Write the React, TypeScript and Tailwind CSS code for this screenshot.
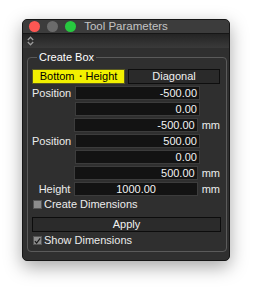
import React from "react";

const font = { fontFamily: '"Liberation Sans", Arial, sans-serif' };

function Field({ value, center }: { value: string; center?: boolean }) {
  return (
    <div
      className={`h-[14px] w-[125px] bg-[#131313] border border-[#3c3c3c] text-[11px] leading-[12px] text-[#f2f2f2] px-[2px] ${
        center ? "text-center" : "text-right"
      }`}
    >
      {value}
    </div>
  );
}

function Row({ label, value, unit, center }: { label?: string; value: string; unit?: boolean; center?: boolean }) {
  return (
    <div className="flex items-center h-[14px]">
      <div className="w-[43px] pr-[4px] text-right text-[11px] leading-[14px] text-[#ececec]">{label ?? ""}</div>
      <Field value={value} center={center} />
      <div className="pl-[4px] text-[11px] leading-[14px] text-[#ececec]">{unit ? "mm" : ""}</div>
    </div>
  );
}

function Check({ checked }: { checked?: boolean }) {
  return (
    <div className="w-[9px] h-[9px] bg-[#8c8c8c] border border-[#555] flex items-center justify-center">
      {checked && (
        <svg width="8" height="8" viewBox="0 0 8 8">
          <path d="M1 4.2 L3 6.3 L7 1" stroke="#1a1a1a" strokeWidth="1.4" fill="none" />
        </svg>
      )}
    </div>
  );
}

export default function App() {
  return (
    <div className="w-[253px] h-[287px] bg-white pt-[19px] pl-[22px]" style={font}>
      <div className="w-[208px] h-[242px] rounded-[5px] bg-[#2f2f2f] border border-[#161616] shadow-[0_6px_18px_rgba(0,0,0,0.35)] overflow-hidden flex flex-col">
        {/* title bar */}
        <div className="relative h-[14px] bg-[#3c3c3c] border-b border-[#161616] flex items-center pl-[6px] gap-[7px]">
          <div className="w-[11px] h-[11px] rounded-full bg-[#fc5753]" />
          <div className="w-[11px] h-[11px] rounded-full bg-[#6b6b6b]" />
          <div className="w-[11px] h-[11px] rounded-full bg-[#27c83f]" />
          <div className="absolute inset-0 flex items-center justify-center text-[11.5px] text-[#c4c4c4] leading-[13px]">
            Tool Parameters
          </div>
        </div>
        {/* toolbar */}
        <div className="h-[14px] bg-gradient-to-b from-[#242424] to-[#3a3a3a] flex items-center pl-[4px]">
          <svg width="7" height="10" viewBox="0 0 7 10">
            <path d="M0.8 4 L3.5 1.2 L6.2 4" stroke="#9a9a9a" strokeWidth="1.3" fill="none" />
            <path d="M0.8 6 L3.5 8.8 L6.2 6" stroke="#9a9a9a" strokeWidth="1.3" fill="none" />
          </svg>
        </div>
        <fieldset className="ml-[4px] mr-[2px] mt-[3px] border border-[#5a5a5a] rounded-[4px] pl-[4px] pr-[6px] pt-[5px] pb-[6px] min-w-0">
          <legend className="ml-[5px] px-[2px] text-[11px] leading-[13px] text-white">Create Box</legend>
          <div className="grid grid-cols-[93px_92px] gap-[3px] h-[15px]">
            <div className="bg-[#f2f000] border border-[#5a5a20] text-black text-[11px] leading-[13px] text-center">
              Bottom・Height
            </div>
            <div className="bg-[#2a2a2a] border border-[#0e0e0e] text-[#f0f0f0] text-[11px] leading-[13px] text-center">
              Diagonal
            </div>
          </div>
          <div className="flex flex-col gap-[2px] mt-[2px]">
            <Row label="Position" value="-500.00" />
            <Row value="0.00" />
            <Row value="-500.00" unit />
            <Row label="Position" value="500.00" />
            <Row value="0.00" />
            <Row value="500.00" unit />
            <Row label="Height" value="1000.00" unit center />
          </div>
          <div className="flex items-center gap-[2px] mt-[4px] h-[9px] pl-[1px]">
            <Check />
            <span className="text-[11px] leading-[11px] text-[#ececec]">Create Dimensions</span>
          </div>
          <div className="mt-[8px] h-[15px] w-[189px] bg-[#2b2b2b] border border-[#0c0c0c] text-[11px] leading-[13px] text-center text-[#f0f0f0]">
            Apply
          </div>
          <div className="flex items-center gap-[2px] mt-[4px] h-[9px] pl-[1px]">
            <Check checked />
            <span className="text-[11px] leading-[11px] text-[#ececec]">Show Dimensions</span>
          </div>
        </fieldset>
      </div>
    </div>
  );
}
